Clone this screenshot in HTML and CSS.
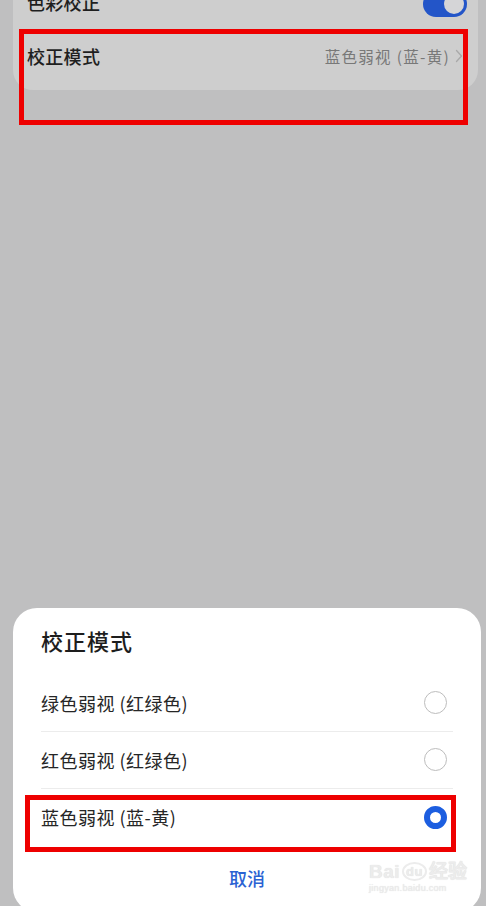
FILE: index.html
```html
<!DOCTYPE html>
<html lang="zh-CN">
<head>
<meta charset="utf-8">
<title>校正模式</title>
<link rel="stylesheet" href="styles.css">
</head>
<body>
<div class="screen">
  <section class="card">
    <div class="row row-switch">
      <span class="row-label">色彩校正</span>
      <span class="switch"><span class="knob"></span></span>
    </div>
    <div class="row row-mode">
      <span class="row-label">校正模式</span>
      <span class="row-value">蓝色弱视 (蓝-黄)<svg class="chev" width="8" height="14" viewBox="0 0 8 14"><path d="M1.5 1.5 L6.5 7 L1.5 12.5" fill="none" stroke="#a9a9a9" stroke-width="1.3" stroke-linecap="round" stroke-linejoin="round"/></svg></span>
    </div>
  </section>

  <section class="sheet">
    <h2 class="sheet-title">校正模式</h2>
    <ul class="options">
      <li class="option"><span>绿色弱视 (红绿色)</span><span class="radio"></span></li>
      <li class="option"><span>红色弱视 (红绿色)</span><span class="radio"></span></li>
      <li class="option"><span>蓝色弱视 (蓝-黄)</span><span class="radio checked"></span></li>
    </ul>
    <div class="cancel">取消</div>
  </section>

  <div class="mark mark-top"></div>
  <div class="mark mark-bottom"></div>

  <div class="watermark">
    <div class="wm-main">Bai<span class="wm-du">du</span>经验</div>
    <div class="wm-sub">jingyan.baidu.com</div>
  </div>
</div>
</body>
</html>
```
FILE: styles.css
```css
* { box-sizing: border-box; }

html, body {
  margin: 0;
  padding: 0;
}

body {
  font-family: "Noto Sans CJK SC", "Noto Sans", sans-serif;
  background: #bfbfc0;
}

.screen {
  position: relative;
  width: 486px;
  height: 906px;
  overflow: hidden;
  background: #bfbfc0;
  display: flex;
  flex-direction: column;
}

/* dimmed settings card behind the sheet */
.card {
  margin: -30px 8px 0 13px;
  background: #cecece;
  border-radius: 0 0 20px 20px;
  padding: 0 11px 0 14px;
}

.row {
  display: flex;
  align-items: center;
  justify-content: space-between;
}

.row-switch {
  height: 62px;
}

.row-mode {
  height: 58px;
  padding-bottom: 10px;
}

.row-label {
  font-size: 18px;
  font-weight: 500;
  color: #1f1f1f;
  letter-spacing: 0.3px;
}

.row-switch .row-label {
  position: relative;
  top: 1px;
}

.row-value {
  display: flex;
  align-items: center;
  gap: 5px;
  font-size: 15.5px;
  letter-spacing: 1.3px;
  color: #787878;
  margin-right: 4px;
}

.chev { display: block; }

.switch {
  position: relative;
  width: 44px;
  height: 26px;
  border-radius: 13px;
  background: #2355c8;
  top: 3px;
}

.knob {
  position: absolute;
  right: 3px;
  top: 3px;
  width: 20px;
  height: 20px;
  border-radius: 50%;
  background: #d5d5d7;
}

/* bottom action sheet */
.sheet {
  margin: auto 5px -6px 13px;
  height: 304px;
  background: #ffffff;
  border-radius: 24px;
  padding: 17px 28px 0 28px;
}

.sheet-title {
  margin: 0 0 20px;
  font-size: 22px;
  line-height: 30px;
  font-weight: 500;
  color: #1d1d1d;
  letter-spacing: 1px;
}

.options {
  list-style: none;
  margin: 0;
  padding: 0;
}

.option {
  display: flex;
  align-items: center;
  justify-content: space-between;
  height: 57px;
  font-size: 18px;
  letter-spacing: 0.5px;
  color: #262626;
  border-bottom: 1px solid #ececec;
  padding-bottom: 1px;
}

.option:last-child {
  border-bottom: none;
}

.radio {
  width: 23px;
  height: 23px;
  border-radius: 50%;
  border: 1.5px solid #bdbdbd;
  margin-right: 6px;
}

.radio.checked {
  border: 6.5px solid #1c5ee0;
  background: #fff;
}

.cancel {
  text-align: center;
  font-size: 18px;
  line-height: 24px;
  font-weight: 500;
  color: #2a62d3;
  padding-top: 20px;
}

/* red annotation frames */
.mark {
  position: absolute;
  border: 5px solid #ee0000;
  pointer-events: none;
}

.mark-top {
  left: 19px;
  top: 29px;
  width: 449px;
  height: 96px;
}

.mark-bottom {
  left: 25px;
  top: 795px;
  width: 431px;
  height: 57px;
}

/* faint site watermark */
.watermark {
  position: absolute;
  left: 369px;
  top: 862px;
  color: #ececec;
  text-shadow: 0 0 1px #d8d8d8;
  font-family: "Liberation Sans", sans-serif;
  line-height: 1;
}

.wm-main {
  font-size: 19px;
  font-weight: 700;
  letter-spacing: 0.5px;
}

.wm-du {
  display: inline-block;
  font-size: 13px;
  border: 2px solid #ececec;
  border-radius: 50%;
  padding: 1px 2px;
  margin: 0 2px;
  vertical-align: 2px;
}

.wm-sub {
  font-size: 9px;
  margin-top: 3px;
  letter-spacing: 0.3px;
}
```
